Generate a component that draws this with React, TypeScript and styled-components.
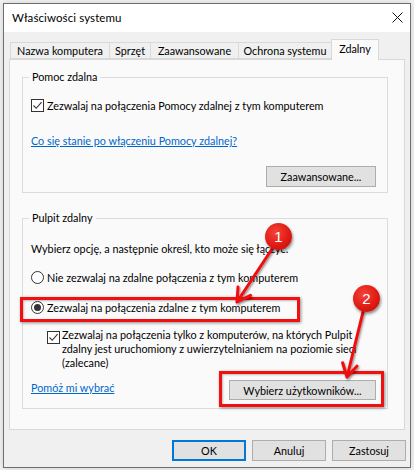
import React from "react";
import styled, { createGlobalStyle } from "styled-components";

const GlobalStyle = createGlobalStyle`
  *, *::before, *::after { box-sizing: border-box; }
  html, body { margin: 0; padding: 0; background: #f2f2f2; }
  body { font-family: Lato, "Liberation Sans", sans-serif; font-size: 10.8px; color: #000; }
`;

const Page = styled.div`
  position: relative;
  width: 414px;
  height: 470px;
  padding: 3px 0 0 3px;
  overflow: hidden;
`;

const Window = styled.div`
  width: 408px;
  height: 465px;
  border: 1px solid #6e6e6e;
  background: #f0f0f0;
  display: flex;
  flex-direction: column;
  box-shadow: 0 0 6px rgba(0, 0, 0, 0.15);
`;

const TitleBar = styled.div`
  height: 28px;
  flex: none;
  background: #ffffff;
  display: flex;
  align-items: center;
  justify-content: space-between;
  padding: 0 7px 2px 8px;
`;

const Title = styled.span`
  font-size: 11.5px;
  letter-spacing: 0.1px;
`;

const CloseIcon = styled.svg`
  width: 11px;
  height: 11px;
  display: block;
`;

const Body = styled.div`
  flex: 1;
  display: flex;
  flex-direction: column;
  padding: 7px 5px 0 5px;
`;

const TabRow = styled.div`
  display: flex;
  align-items: flex-end;
  height: 20px;
  padding-left: 1px;
`;

const Tab = styled.div<{ $w: number; $active?: boolean }>`
  position: relative;
  width: ${(p) => p.$w}px;
  height: ${(p) => (p.$active ? 21 : 17)}px;
  margin-left: -1px;
  margin-bottom: ${(p) => (p.$active ? -1 : 0)}px;
  z-index: ${(p) => (p.$active ? 2 : 1)};
  border: 1px solid #d9d9d9;
  border-bottom: ${(p) => (p.$active ? "none" : "1px solid #d9d9d9")};
  background: ${(p) => (p.$active ? "#fafafa" : "#f0f0f0")};
  display: flex;
  justify-content: center;
  align-items: ${(p) => (p.$active ? "flex-start" : "center")};
  padding-top: ${(p) => (p.$active ? 2 : 0)}px;
  font-size: 10.8px;
  line-height: 14px;
  white-space: nowrap;
  &:first-child { margin-left: 0; }
`;

const Panel = styled.div`
  height: 371px;
  border: 1px solid #d9d9d9;
  background: #fafafa;
  padding: 10px 16px 0 12px;
  display: flex;
  flex-direction: column;
`;

const Group = styled.fieldset<{ $top?: number; $bottom: number }>`
  margin: ${(p) => p.$top ?? 0}px 0 0 0;
  border: 1px solid #dcdcdc;
  padding: 0 11px ${(p) => p.$bottom}px 8px;
  min-width: 0;
  display: flex;
  flex-direction: column;
`;

const Legend = styled.legend`
  padding: 0 3px;
  margin-left: -2px;
  line-height: 14px;
  font-size: 10.8px;
`;

const Line = styled.div<{ $top: number }>`
  margin-top: ${(p) => p.$top}px;
  line-height: 15px;
  white-space: nowrap;
`;

const OptionRow = styled.label<{ $top: number }>`
  margin-top: ${(p) => p.$top}px;
  display: flex;
  align-items: center;
  gap: 3px;
  line-height: 15px;
  white-space: nowrap;
`;

const Box = styled.span`
  width: 13px;
  height: 13px;
  flex: none;
  border: 1px solid #333333;
  background: #ffffff;
  display: flex;
  align-items: center;
  justify-content: center;
`;

const Radio = styled.span<{ $on?: boolean }>`
  width: 13px;
  height: 13px;
  flex: none;
  border-radius: 50%;
  border: 1px solid #333333;
  background: #ffffff;
  display: flex;
  align-items: center;
  justify-content: center;
  &::after {
    content: "";
    display: ${(p) => (p.$on ? "block" : "none")};
    width: 7px;
    height: 7px;
    border-radius: 50%;
    background: #333333;
  }
`;

const SubOption = styled.div<{ $top: number }>`
  margin-top: ${(p) => p.$top}px;
  padding-left: 16px;
  display: flex;
  align-items: flex-start;
  gap: 2px;
`;

const SubBox = styled(Box)`
  margin-top: 3px;
`;

const SubText = styled.div`
  line-height: 14px;
  white-space: nowrap;
  overflow: hidden;
  width: 295px;
`;

const Link = styled.a<{ $top?: number }>`
  margin-top: ${(p) => p.$top ?? 0}px;
  color: #0066cc;
  text-decoration: underline;
  line-height: 15px;
  align-self: flex-start;
  white-space: nowrap;
  cursor: pointer;
`;

const ButtonRow = styled.div<{ $top: number; $between?: boolean }>`
  margin-top: ${(p) => p.$top}px;
  display: flex;
  align-items: center;
  justify-content: ${(p) => (p.$between ? "space-between" : "flex-end")};
`;

const Button = styled.button<{ $w: number; $h?: number; $default?: boolean }>`
  width: ${(p) => p.$w}px;
  height: ${(p) => p.$h ?? 21}px;
  padding: 0;
  font-family: inherit;
  font-size: 10.8px;
  color: #000;
  background: #e1e1e1;
  border: 1px solid ${(p) => (p.$default ? "#0078d7" : "#adadad")};
  box-shadow: ${(p) => (p.$default ? "inset 0 0 0 1px #0078d7" : "none")};
  white-space: nowrap;
`;

const DialogButtons = styled.div`
  margin: 10px -1px 0 0;
  display: flex;
  justify-content: flex-end;
  gap: 6px;
`;

const Highlight = styled.div<{ $x: number; $y: number; $w: number; $h: number }>`
  position: absolute;
  left: ${(p) => p.$x}px;
  top: ${(p) => p.$y}px;
  width: ${(p) => p.$w}px;
  height: ${(p) => p.$h}px;
  border: 3px solid #f10f0f;
  box-shadow: 1px 1px 3px rgba(0, 0, 0, 0.45), inset 1px 1px 2px rgba(0, 0, 0, 0.25);
  pointer-events: none;
`;

const Badge = styled.div<{ $x: number; $y: number }>`
  position: absolute;
  left: ${(p) => p.$x - 13.5}px;
  top: ${(p) => p.$y - 13.5}px;
  width: 27px;
  height: 27px;
  border-radius: 50%;
  background: radial-gradient(circle at 40% 35%, #f5443a 0%, #e01b14 55%, #b90c08 100%);
  box-shadow: 1px 2px 3px rgba(0, 0, 0, 0.45);
  color: #ffffff;
  font-family: "Liberation Sans", Arial, sans-serif;
  font-size: 15px;
  display: flex;
  align-items: center;
  justify-content: center;
  z-index: 6;
`;

const ArrowLayer = styled.svg`
  position: absolute;
  left: 0;
  top: 0;
  width: 414px;
  height: 470px;
  pointer-events: none;
  z-index: 5;
`;

const tabs = [
  { label: "Nazwa komputera", w: 100 },
  { label: "Sprzęt", w: 42 },
  { label: "Zaawansowane", w: 89 },
  { label: "Ochrona systemu", w: 94 },
  { label: "Zdalny", w: 48, active: true },
];

const Check = () => (
  <svg width="11" height="11" viewBox="0 0 11 11">
    <path d="M1.5 5.5 L4.2 8.3 L9.6 2.2" fill="none" stroke="#333" strokeWidth="1.1" />
  </svg>
);

export default function App() {
  return (
    <Page>
      <GlobalStyle />
      <Window>
        <TitleBar>
          <Title>Właściwości systemu</Title>
          <CloseIcon viewBox="0 0 11 11">
            <path d="M0.5 0.5 L10.5 10.5 M10.5 0.5 L0.5 10.5" stroke="#111" strokeWidth="1" />
          </CloseIcon>
        </TitleBar>
        <Body>
          <TabRow>
            {tabs.map((t) => (
              <Tab key={t.label} $w={t.w} $active={t.active}>
                {t.label}
              </Tab>
            ))}
          </TabRow>
          <Panel>
            <Group $bottom={5}>
              <Legend>Pomoc zdalna</Legend>
              <OptionRow $top={14}>
                <Box>
                  <Check />
                </Box>
                Zezwalaj na połączenia Pomocy zdalnej z tym komputerem
              </OptionRow>
              <Link $top={20}>Co się stanie po włączeniu Pomocy zdalnej?</Link>
              <ButtonRow $top={18}>
                <Button $w={110}>Zaawansowane...</Button>
              </ButtonRow>
            </Group>
            <Group $top={18} $bottom={8}>
              <Legend>Pulpit zdalny</Legend>
              <Line $top={16}>Wybierz opcję, a następnie określ, kto może się łączyć.</Line>
              <OptionRow $top={14}>
                <Radio />
                Nie zezwalaj na zdalne połączenia z tym komputerem
              </OptionRow>
              <OptionRow $top={15}>
                <Radio $on />
                Zezwalaj na połączenia zdalne z tym komputerem
              </OptionRow>
              <SubOption $top={13}>
                <SubBox>
                  <Check />
                </SubBox>
                <SubText>
                  Zezwalaj na połączenia tylko z komputerów, na których Pulpit
                  <br />
                  zdalny jest uruchomiony z uwierzytelnianiem na poziomie sieci
                  <br />
                  (zalecane)
                </SubText>
              </SubOption>
              <ButtonRow $top={10} $between>
                <Link>Pomóż mi wybrać</Link>
                <Button $w={147} $h={20}>Wybierz użytkowników...</Button>
              </ButtonRow>
            </Group>
          </Panel>
          <DialogButtons>
            <Button $w={74} $default>OK</Button>
            <Button $w={74}>Anuluj</Button>
            <Button $w={74}>Zastosuj</Button>
          </DialogButtons>
        </Body>
      </Window>

      <Highlight $x={20} $y={297} $w={280} $h={25} />
      <Highlight $x={219} $y={371} $w={165} $h={36} />

      <ArrowLayer viewBox="0 0 414 470">
        <defs>
          <filter id="arrowShadow" x="-20%" y="-20%" width="140%" height="140%">
            <feDropShadow dx="1" dy="1.5" stdDeviation="1.2" floodColor="#000" floodOpacity="0.45" />
          </filter>
        </defs>
        <g stroke="#f01010" strokeWidth="3" strokeLinecap="round" strokeLinejoin="round" fill="none" filter="url(#arrowShadow)">
          <path d="M272 249 L237 302 M250.5 295.4 L237 302 L238 287" />
          <path d="M363 312 L347 377 M357 366 L347 377 L342.6 362.7" />
        </g>
      </ArrowLayer>

      <Badge $x={278.5} $y={236}>1</Badge>
      <Badge $x={366.5} $y={298.5}>2</Badge>
    </Page>
  );
}
